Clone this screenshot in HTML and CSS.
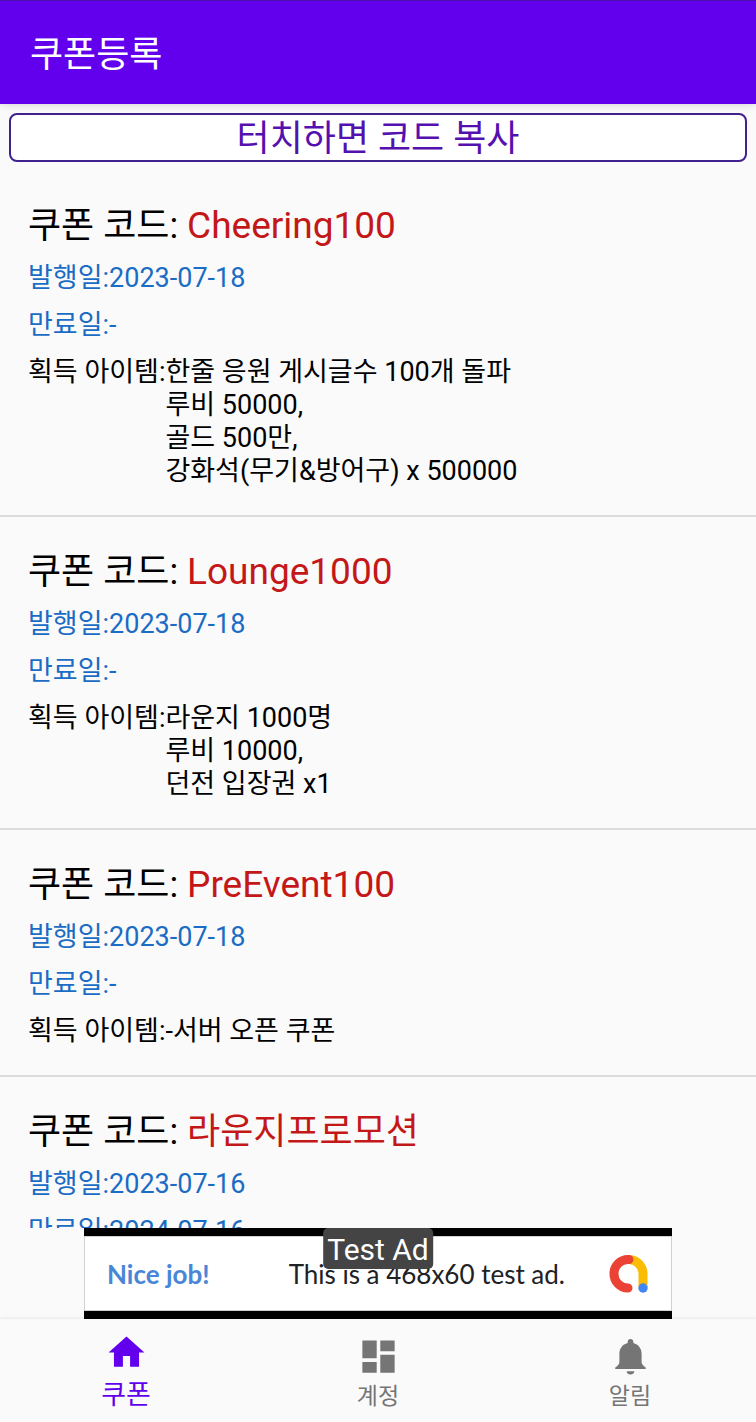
FILE: index.html
```html
<!DOCTYPE html>
<html lang="ko">
<head>
<meta charset="utf-8">
<meta name="viewport" content="width=device-width, initial-scale=1">
<title>쿠폰등록</title>
<link rel="stylesheet" href="styles.css">
</head>
<body>
<div class="app">
  <header class="app-bar"><h1 class="app-title">쿠폰등록</h1></header>
  <main class="content">
    <button class="copy-button" type="button">터치하면 코드 복사</button>
    <ul class="coupons">
      <li class="coupon">
        <h2 class="code">쿠폰 코드: <span class="code-value">Cheering100</span></h2>
        <p class="date">발행일:2023-07-18</p>
        <p class="date">만료일:-</p>
        <div class="reward"><span>획득 아이템:</span><p>한줄 응원 게시글수 100개 돌파<br>루비 50000,<br>골드 500만,<br>강화석(무기&amp;방어구) x 500000</p></div>
      </li>
      <li class="coupon">
        <h2 class="code">쿠폰 코드: <span class="code-value">Lounge1000</span></h2>
        <p class="date">발행일:2023-07-18</p>
        <p class="date">만료일:-</p>
        <div class="reward"><span>획득 아이템:</span><p>라운지 1000명<br>루비 10000,<br>던전 입장권 x1</p></div>
      </li>
      <li class="coupon">
        <h2 class="code">쿠폰 코드: <span class="code-value">PreEvent100</span></h2>
        <p class="date">발행일:2023-07-18</p>
        <p class="date">만료일:-</p>
        <div class="reward"><span>획득 아이템:</span><p>-서버 오픈 쿠폰</p></div>
      </li>
      <li class="coupon">
        <h2 class="code">쿠폰 코드: <span class="code-value code-value-ko">라운지프로모션</span></h2>
        <p class="date">발행일:2023-07-16</p>
        <p class="date">만료일:2024-07-16</p>
      </li>
    </ul>
  </main>
  <aside class="ad">
    <div class="ad-card">
      <span class="ad-cheer">Nice job!</span>
      <span class="ad-text">This is a 468x60 test ad.</span>
      <svg class="ad-logo" viewBox="0 0 40 40" aria-hidden="true">
        <path d="M20 5.500A14.500 14.500 0 0 1 34 20v13" fill="none" stroke="#fbbc04" stroke-width="9"/>
        <circle cx="34" cy="34" r="4.700" fill="#4285f4"/>
        <path d="M20 5.500h-1a14 14.200 0 0 0 0 28.500" fill="none" stroke="#ea4335" stroke-width="9" stroke-linecap="round"/>
      </svg>
    </div>
    <span class="ad-badge">Test Ad</span>
  </aside>
  <nav class="tabs">
    <a class="tab tab-active" href="#coupons">
      <svg class="tab-icon" viewBox="0 0 24 24" aria-hidden="true"><path d="M10 20v-6h4v6h5v-8h3L12 3 2 12h3v8z"/></svg>
      <span>쿠폰</span>
    </a>
    <a class="tab" href="#account">
      <svg class="tab-icon" viewBox="0 0 24 24" aria-hidden="true"><path d="M3 13h8V3H3v10zm0 8h8v-6H3v6zm10 0h8V11h-8v10zm0-18v6h8V3h-8z"/></svg>
      <span>계정</span>
    </a>
    <a class="tab" href="#alerts">
      <svg class="tab-icon" viewBox="0 0 24 24" aria-hidden="true"><path d="M12 2.300c-.9 0-1.600.7-1.600 1.600v.5C7.600 5.200 5.800 7.400 5.800 10.500V15c0 1.200-.8 2-2.300 3.100V19h17v-.9C19 17 18.200 16.200 18.200 15v-4.500c0-3.100-1.800-5.300-4.600-6.100v-.5c0-.9-.7-1.600-1.600-1.600zM9.800 20.200h4.400c-.2 1.200-1.100 1.800-2.200 1.800s-2-.6-2.200-1.800z"/></svg>
      <span>알림</span>
    </a>
  </nav>
</div>
</body>
</html>
```

FILE: styles.css
```css
* { box-sizing: border-box; margin: 0; padding: 0; }
body {
  background: #fafafa;
  color: #000;
  font-family: Roboto, "Noto Sans CJK KR", sans-serif;
}
.app { display: flex; flex-direction: column; height: 100vh; }
.app-bar {
  display: flex;
  align-items: center;
  flex: none;
  height: 104px;
  padding: 4px 30px 0;
  background: #6200ee;
  border-top: 1px solid #4a12a8;
  box-shadow: 0 1px 8px rgba(0, 0, 0, .15);
}
.app-title { color: #fff; font-size: 36px; font-weight: 400; line-height: 44px; }
.content { display: flex; flex-direction: column; flex: 1; min-height: 0; overflow: hidden; padding-top: 9px; }
.copy-button {
  flex: none;
  height: 49px;
  margin: 0 9px;
  padding-top: 4px;
  border: 2px solid #41208f;
  border-radius: 8px;
  background: #fff;
  color: #5511b0;
  font: 400 36px/41px Roboto, "Noto Sans CJK KR", sans-serif;
}
.coupons { flex: 1; list-style: none; padding-top: 9px; }
.coupon {
  display: flex;
  flex-direction: column;
  gap: 14px;
  padding: 33px 28px 27px;
  border-bottom: 2px solid #dcdcdc;
  font-size: 27px;
  line-height: 33px;
}
.code { font-size: 36px; font-weight: 400; line-height: 44px; }
.code-value { color: #c41818; font-size: 37px; }
.code-value-ko { font-size: 36px; }
.date { color: #1a6cc4; }
.reward { display: flex; }
.ad {
  position: relative;
  z-index: 1;
  flex: none;
  align-self: center;
  width: 588px;
  max-width: 100%;
  padding: 8px 0;
  background: #000;
}
.ad-card {
  display: flex;
  align-items: center;
  height: 75px;
  padding: 0 22px;
  border: 1px solid #d0d0d0;
  background: #fff;
  color: #202124;
  font: 400 26px/32px Lato, sans-serif;
}
.ad-cheer { color: #4a86d8; font-weight: 700; }
.ad-text { margin-left: auto; }
.ad-logo { width: 40px; height: 40px; margin-left: 44px; }
.ad-badge {
  position: absolute;
  top: 0;
  left: 50%;
  transform: translateX(-50%);
  padding: 4px 4px 1px;
  border-radius: 5px;
  background: #444;
  color: #fff;
  font-size: 30px;
  line-height: 36px;
  white-space: nowrap;
}
.tabs {
  display: flex;
  flex: none;
  height: 103px;
  background: #fafafa;
  box-shadow: 0 -1px 3px rgba(0, 0, 0, .08);
}
.tab {
  display: flex;
  flex: 1;
  flex-direction: column;
  align-items: center;
  padding-top: 16px;
  gap: 2px;
  color: #757575;
  font-size: 23px;
  line-height: 34px;
  text-decoration: none;
}
.tab-active { padding-top: 12px; gap: 4px; color: #6200ee; font-size: 27px; }
.tab-icon { width: 43px; height: 43px; fill: currentColor; }
```
